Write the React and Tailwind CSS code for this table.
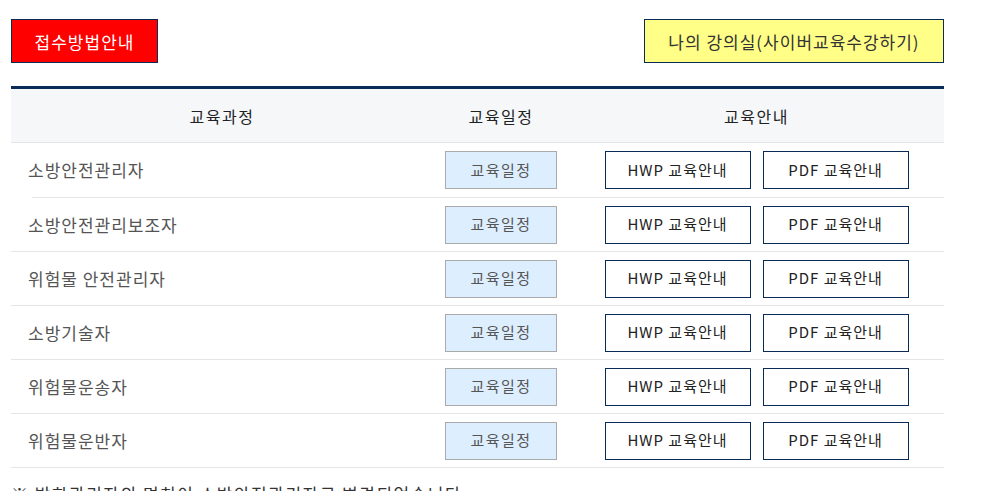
import React from 'react'

const courses = ['소방안전관리자', '소방안전관리보조자', '위험물 안전관리자', '소방기술자', '위험물운송자', '위험물운반자']

const App = () => {
  return (
    <div className="w-[997px] h-[491px] overflow-hidden bg-white font-['Noto_Sans_CJK_KR',sans-serif]">
      <div className="ml-[11px] w-[933px] pt-[19px]">
        <div className="flex justify-between items-start">
          <button className="w-[147px] h-[44px] bg-[#ff0000] border border-[#0b2b57] text-white text-[17px] tracking-[1px] leading-none">접수방법안내</button>
          <button className="w-[300px] h-[44px] bg-[#ffff88] border border-[#0b2b57] text-[#333] text-[17px] tracking-[1px] leading-none">나의 강의실(사이버교육수강하기)</button>
        </div>

        <div className="mt-[23px] border-t-[3px] border-[#0b2b57]">
          <div className="flex h-[54px] items-center bg-[#f5f7f9] border-b border-[#e3e5e8] text-[16px] tracking-[1.5px] text-[#222]">
            <div className="w-[422px] text-center">교육과정</div>
            <div className="w-[136px] text-center">교육일정</div>
            <div className="flex-1 text-center">교육안내</div>
          </div>

          {courses.map((name, i) => (
            <div key={name}>
              <div className={`flex h-[54px] items-center ${i === 0 ? '' : 'border-b border-[#e5e5e5]'}`}>
                <div className="w-[422px] pl-[17px] text-[17px] tracking-[1px] text-[#555]">{name}</div>
                <div className="w-[136px] flex justify-center">
                  <button className="w-[112px] h-[38px] bg-[#ddeeff] border border-[#aaaaaa] text-[15px] tracking-[1.5px] text-[#555]">교육일정</button>
                </div>
                <div className="flex-1 flex justify-center gap-[12px]">
                  <button className="w-[146px] h-[38px] border border-[#0b2b57] text-[15px] tracking-[1px] text-[#222]">HWP 교육안내</button>
                  <button className="w-[146px] h-[38px] border border-[#0b2b57] text-[15px] tracking-[1px] text-[#222]">PDF 교육안내</button>
                </div>
              </div>
              {i === 0 && <div className="ml-[21px] h-px bg-[#e5e5e5]" />}
            </div>
          ))}
        </div>

        <p className="mt-[16px] text-[17px] tracking-[1.5px] leading-[20px] text-[#333]">※ 방화관리자의 명칭이 소방안전관리자로 변경되었습니다</p>
      </div>
    </div>
  )
}

export default App
